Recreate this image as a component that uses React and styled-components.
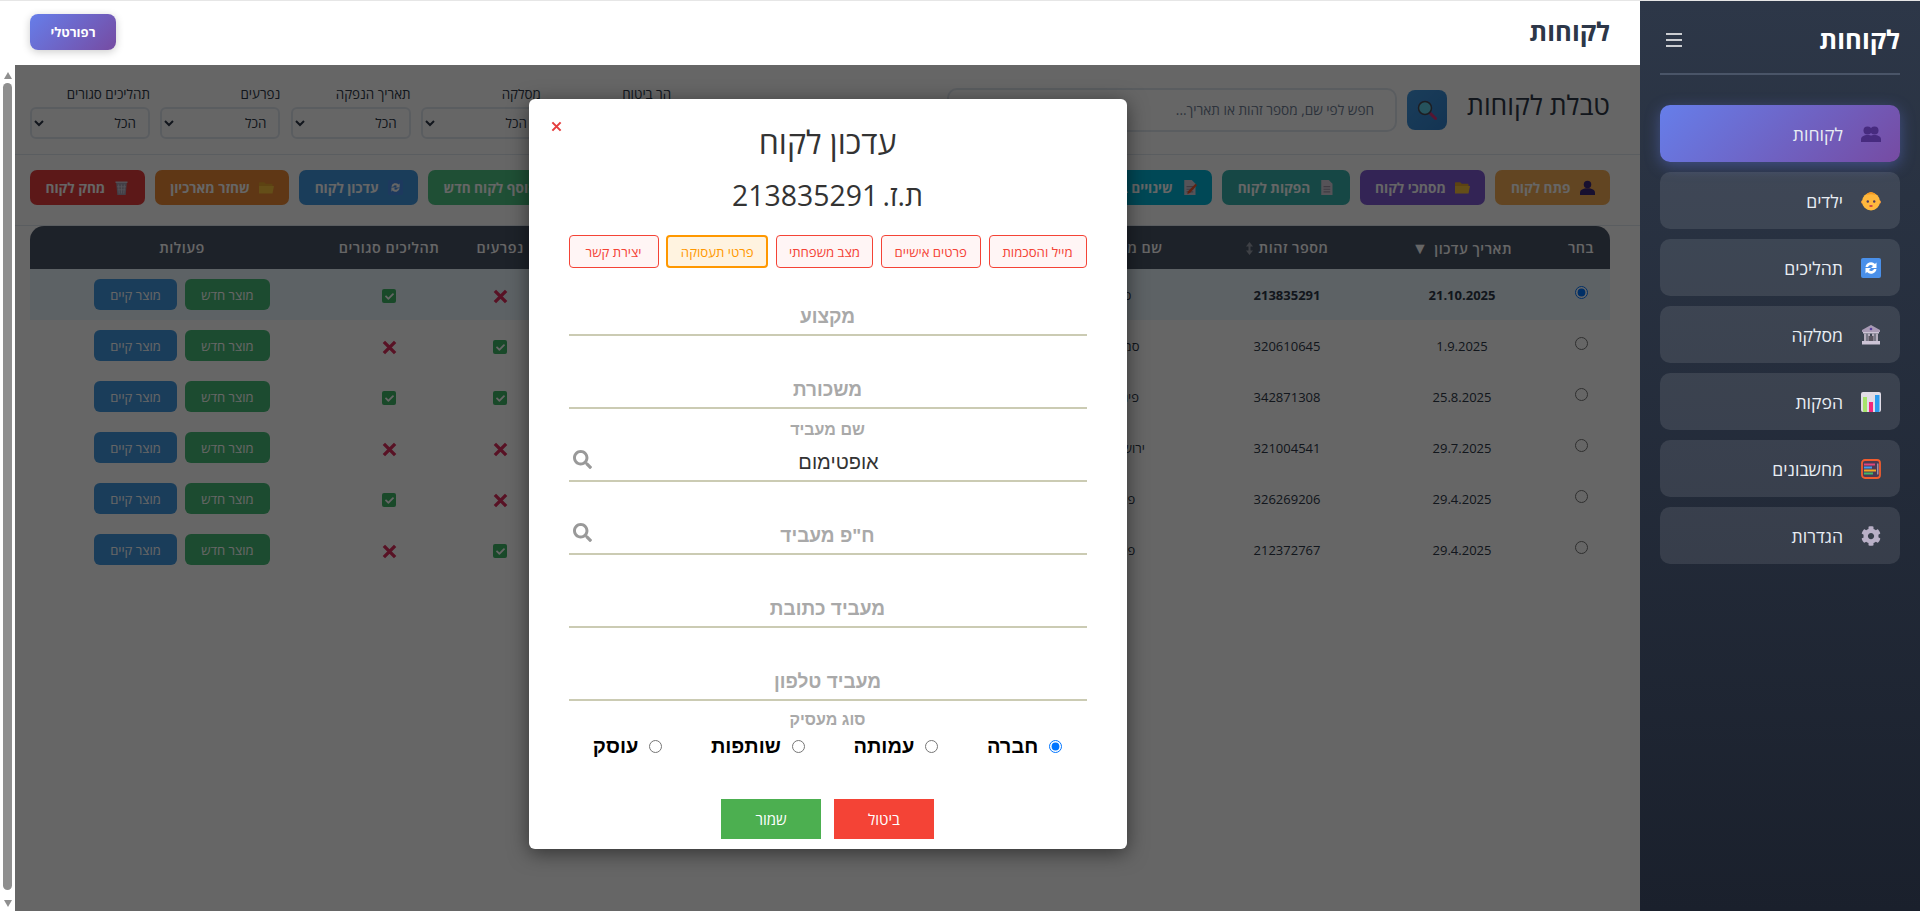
import React from "react";
import styled, { createGlobalStyle } from "styled-components";
import { FaSearch, FaCog, FaCheck } from "react-icons/fa";

const GlobalStyle = createGlobalStyle`
  * { box-sizing: border-box; }
  html, body { margin: 0; height: 100%; overflow: hidden; }
  body { font-family: "Open Sans", "Noto Sans", "Liberation Sans", sans-serif; color: #2d3748; background: #fff; }
`;

const Page = styled.div`
  display: flex;
  height: 911px;
  direction: rtl;
  border-top: 1px solid #e6e6e6;
`;

const Sidebar = styled.aside`
  width: 280px;
  flex: none;
  padding: 0 20px;
  background: linear-gradient(180deg, #2d3748 0%, #1a202c 100%);
`;

const SidebarHead = styled.div`
  height: 74px;
  padding-top: 5px;
  display: flex;
  align-items: center;
  justify-content: space-between;
  border-bottom: 2px solid #4a5568;
  color: #fff;
`;

const SidebarTitle = styled.h2`
  margin: 0;
  font-size: 25.6px;
  font-weight: 700;
`;

const Burger = styled.svg`
  width: 18px;
  height: 18px;
  margin-left: 5px;
`;

const Nav = styled.nav`
  display: flex;
  flex-direction: column;
  gap: 10px;
  margin-top: 30px;
`;

const NavItem = styled.div`
  height: 57px;
  display: flex;
  align-items: center;
  gap: 18px;
  padding: 0 19px;
  border-radius: 10px;
  color: #e8edf3;
  font-size: 17.6px;
  background: ${p => (p.$active ? "linear-gradient(135deg, #667eea 0%, #764ba2 100%)" : "rgba(255, 255, 255, 0.1)")};
  box-shadow: ${p => (p.$active ? "0 4px 15px rgba(102, 126, 234, 0.4)" : "none")};
`;

const Content = styled.div`
  flex: 1;
  min-width: 0;
  display: flex;
  flex-direction: column;
`;

const TopBar = styled.header`
  height: 64px;
  flex: none;
  display: flex;
  align-items: center;
  justify-content: space-between;
  padding: 0 30px 3px 30px;
  background: #fff;
`;

const TopTitle = styled.h1`
  margin: 0;
  font-size: 25.6px;
  font-weight: 700;
  color: #2d3748;
`;

const PortalButton = styled.button`
  width: 86px;
  height: 36px;
  border: 0;
  border-radius: 8px;
  background: linear-gradient(135deg, #667eea 0%, #764ba2 100%);
  box-shadow: 0 2px 8px rgba(0, 0, 0, 0.2);
  color: #fff;
  font: 700 13px "Open Sans", sans-serif;
`;

const Body = styled.div`
  flex: 1;
  min-height: 0;
  display: flex;
`;

const Main = styled.main`
  position: relative;
  flex: 1;
  min-width: 0;
  overflow: hidden;
  background: #fff;
`;

const Toolbar = styled.section`
  height: 90px;
  padding: 0 30px 0 15px;
  display: flex;
  align-items: center;
  justify-content: space-between;
  border-bottom: 1px solid #e2e8f0;
`;

const SearchGroup = styled.div`
  display: flex;
  align-items: center;
`;

const PageTitle = styled.h2`
  margin: 0 0 10px 20px;
  font-size: 26.6px;
  font-weight: 400;
  color: #2d3748;
`;

const SearchButton = styled.button`
  width: 40px;
  height: 40px;
  margin-left: 10px;
  padding: 0;
  display: flex;
  align-items: center;
  justify-content: center;
  border: 0;
  border-radius: 8px;
  background: linear-gradient(135deg, #4299e1, #3182ce);
`;

const SearchInput = styled.input`
  width: 450px;
  height: 44px;
  padding: 0 21px;
  border: 2px solid #e2e8f0;
  border-radius: 10px;
  background: #fff;
  font: 13.6px "Open Sans", sans-serif;
  direction: rtl;
  &::placeholder { color: #718096; opacity: 1; }
`;

const Filters = styled.div`
  display: flex;
  gap: 10.3px;
  padding-top: 4px;
`;

const FilterBox = styled.label`
  width: 120px;
  display: flex;
  flex-direction: column;
  gap: 4px;
  font-size: 13.4px;
  color: #2d3748;
  line-height: 18px;
  white-space: nowrap;
`;

const FilterSelect = styled.select`
  height: 32px;
  padding: 0 8px;
  border: 2px solid #e2e8f0;
  border-radius: 6px;
  background: #fff;
  color: #2d3748;
  font: 13.4px "Open Sans", sans-serif;
`;

const Actions = styled.section`
  height: 71px;
  padding: 15px 30px 0 15px;
  display: flex;
  justify-content: space-between;
  border-bottom: 1px solid #e2e8f0;
`;

const ActionGroup = styled.div`
  display: flex;
  gap: 10px;
`;

const ActionButton = styled.button`
  height: 35px;
  padding: 0 15.5px;
  display: flex;
  align-items: center;
  gap: 9px;
  border: 0;
  border-radius: 7px;
  background: ${p => p.$color};
  color: #fff;
  font: 700 13.6px "Open Sans", sans-serif;
  white-space: nowrap;
`;

const TableWrap = styled.div`
  padding: 0 30px 0 15px;
`;

const Table = styled.table`
  width: 100%;
  table-layout: fixed;
  border-collapse: collapse;
`;

const HeadCell = styled.th`
  height: 43px;
  padding: 0;
  background: #4a5568;
  color: #fff;
  font-size: 14.4px;
  font-weight: 600;
  letter-spacing: 0.5px;
  white-space: nowrap;
  &:first-child { border-top-right-radius: 14px; }
  &:last-child { border-top-left-radius: 14px; }
`;

const SortMark = styled.span`
  margin-right: 6px;
  font-size: 16px;
`;

const SortBoth = styled.svg`
  margin-right: 6px;
  vertical-align: -2px;
`;

const Row = styled.tr`
  height: 51px;
  background: ${p => (p.$selected ? "#e8f5fc" : "transparent")};
`;

const Cell = styled.td`
  padding: 0;
  text-align: center;
  font-size: 13px;
  font-weight: ${p => (p.$bold ? 700 : 400)};
  color: #2d3748;
`;

const RowRadio = styled.input`
  width: 13px;
  height: 13px;
  margin: 0;
  position: relative;
  top: -1px;
`;

const CrossSvg = styled.svg`
  display: ${p => (p.$inline ? "inline-block" : "block")};
  vertical-align: middle;
`;

const Ticked = styled.span`
  width: 14px;
  height: 14px;
  display: inline-flex;
  align-items: center;
  justify-content: center;
  vertical-align: middle;
  border-radius: 2px;
  background: #3fb668;
  color: #fff;
  font-size: 9px;
`;

const RowActions = styled.div`
  display: flex;
  justify-content: center;
  gap: 8px;
`;

const RowButton = styled.button`
  width: ${p => p.$width}px;
  height: 31px;
  padding: 0;
  border: 0;
  border-radius: 6px;
  background: ${p => p.$color};
  color: #fff;
  font: 13px "Open Sans", sans-serif;
`;

const ScrollTrack = styled.div`
  width: 15px;
  flex: none;
  display: flex;
  flex-direction: column;
  align-items: center;
  padding: 7px 0 4px;
  gap: 4px;
  background: #fff;
`;

const ScrollArrow = styled.span`
  width: 0;
  height: 0;
  border-left: 4.5px solid transparent;
  border-right: 4.5px solid transparent;
  border-${p => (p.$down ? "top" : "bottom")}: 7px solid #8f8f8f;
`;

const ScrollThumb = styled.div`
  flex: 1;
  width: 9px;
  margin: 0 0 6px;
  border-radius: 5px;
  background: #8f8f8f;
`;

const Overlay = styled.div`
  position: absolute;
  inset: 0;
  display: flex;
  justify-content: center;
  align-items: flex-start;
  padding-top: 34px;
  background: rgba(0, 0, 0, 0.6);
`;

const Modal = styled.div`
  position: relative;
  width: 598px;
  height: 750px;
  padding: 0 40px;
  border-radius: 6px;
  background: #fff;
  box-shadow: 0 4px 20px rgba(0, 0, 0, 0.5);
`;

const CloseButton = styled.span`
  position: absolute;
  top: 22px;
  left: 22px;
`;

const ModalTitle = styled.h2`
  margin: 0;
  padding-top: 20px;
  height: 67px;
  text-align: center;
  font-size: 32px;
  line-height: 46px;
  font-weight: 400;
  color: #333;
`;

const ModalId = styled.h3`
  margin: 0;
  height: 69px;
  padding-top: 7px;
  text-align: center;
  font-size: 28.4px;
  line-height: 44px;
  font-weight: 400;
  word-spacing: -3px;
  color: #333;
`;

const Tabs = styled.div`
  display: flex;
  justify-content: space-between;
`;

const Tab = styled.button`
  width: ${p => p.$width}px;
  height: 33px;
  padding: 0;
  border: ${p => (p.$active ? "2px solid #ff9800" : "1px solid #f44336")};
  border-radius: 4px;
  background: ${p => (p.$active ? "#fff3e0" : "#fff5f5")};
  color: ${p => (p.$active ? "#ff9800" : "#f44336")};
  font: 13.2px "Open Sans", sans-serif;
`;

const Fields = styled.div`
  margin-top: -5px;
`;

const Field = styled.div`
  position: relative;
  height: 73px;
  display: flex;
  flex-direction: column;
  justify-content: flex-end;
  align-items: center;
`;

const FieldLabel = styled.label`
  font: 700 16px/20px "Liberation Sans", sans-serif;
  color: #a9a9a9;
`;

const LiftedLabel = styled(FieldLabel)`
  margin-bottom: 4px;
`;

const FieldInput = styled.input`
  width: 100%;
  height: 38px;
  padding: ${p => (p.$filled ? "0 8px 0 30px" : "0 30px")};
  border: 0;
  border-bottom: 2px solid #cbcbb3;
  outline: 0;
  background: transparent;
  text-align: center;
  direction: rtl;
  font: 20px "Liberation Sans", sans-serif;
  color: #333;
  &::placeholder { color: #a9a9a9; font-size: 19px; font-weight: 700; opacity: 1; }
`;

const FieldIcon = styled(FaSearch)`
  position: absolute;
  left: 4px;
  bottom: 13px;
  width: 19px;
  height: 19px;
  color: #999;
`;

const TypeLabel = styled(FieldLabel)`
  display: block;
  margin-top: 9px;
  text-align: center;
`;

const RadioRow = styled.div`
  display: flex;
  justify-content: space-around;
  margin-top: 3px;
`;

const RadioItem = styled.label`
  display: flex;
  align-items: center;
  gap: 11px;
  font: 700 20px/26px "Liberation Sans", sans-serif;
  color: #000;
`;

const TypeRadio = styled.input`
  width: 13px;
  height: 13px;
  margin: 0;
`;

const ModalButtons = styled.div`
  display: flex;
  justify-content: center;
  gap: 13px;
  margin-top: 40px;
`;

const ModalButton = styled.button`
  width: 100px;
  height: 40px;
  border: 0;
  background: ${p => p.$color};
  color: #fff;
  font: 15px "Open Sans", sans-serif;
`;

/* small emoji style drawings */
const Cross = ({ size = 15, width = 3.6, color = "#dc2f5c", inline }) => (
  <CrossSvg $inline={inline} width={size} height={size} viewBox="0 0 16 16">
    <path d="M2 2l12 12M14 2L2 14" stroke={color} strokeWidth={width} fill="none" />
  </CrossSvg>
);

const UsersIcon = ({ size = 20, color = "#472b7f" }) => (
  <svg width={size} height={size} viewBox="0 0 20 20">
    <g fill={color}>
      <circle cx="6.500" cy="6.500" r="4" />
      <path d="M0 18v-2.500C0 12.500 3 11 6.500 11s6.500 1.500 6.500 4.500V18z" />
      <circle cx="13.500" cy="6.500" r="4" />
      <path d="M7 18v-2.500C7 12.500 10 11 13.500 11s6.500 1.500 6.500 4.500V18z" />
    </g>
  </svg>
);

const PersonIcon = () => (
  <svg width="15" height="15" viewBox="0 0 20 20">
    <g fill="#3d2a78">
      <circle cx="10" cy="6" r="5" />
      <path d="M0 20v-3c0-4 4-6 10-6s10 2 10 6v3z" />
    </g>
  </svg>
);

const BabyIcon = () => (
  <svg width="20" height="20" viewBox="0 0 20 20">
    <circle cx="1.800" cy="11" r="1.800" fill="#ff9d3c" />
    <circle cx="18.200" cy="11" r="1.800" fill="#ff9d3c" />
    <circle cx="10" cy="10.500" r="9" fill="#ffb83d" />
    <path d="M5 4c3-4 7-4 10 0-3-1-7-1-10 0z" fill="#f59a23" />
    <circle cx="6.800" cy="10.500" r="1.200" fill="#503a5c" />
    <circle cx="13.200" cy="10.500" r="1.200" fill="#503a5c" />
    <ellipse cx="10" cy="15" rx="1.800" ry="1" fill="#c9424a" />
  </svg>
);

const RefreshIcon = ({ size = 20 }) => (
  <svg width={size} height={size} viewBox="0 0 20 20">
    <rect width="20" height="20" rx="2" fill="#4a90ea" />
    <path d="M4.500 9a5.500 5.500 0 0 1 9.500-3l1.500-1.500V10h-5.500l2-2a3 3 0 0 0-5 1zM15.500 11a5.500 5.500 0 0 1-9.500 3l-1.500 1.500V10H10l-2 2a3 3 0 0 0 5-1z" fill="#fff" />
  </svg>
);

const BankIcon = () => (
  <svg width="20" height="20" viewBox="0 0 20 20">
    <path d="M10 0l9 5v2H1V5z" fill="#a99bb5" />
    <circle cx="10" cy="4" r="1.300" fill="#5b3f9c" />
    <path d="M2 7h16v1.500H2z" fill="#cdc4d6" />
    <path d="M3 8.500h2.500V16H3zM6.500 8.500H9V16H6.500zM11 8.500h2.500V16H11zM14.500 8.500H17V16h-2.500z" fill="#b4acbc" />
    <path d="M7.500 11h5v5h-5z" fill="#5a5560" />
    <path d="M1 16h18v3.500H1z" fill="#cdc4d6" />
  </svg>
);

const ChartIcon = () => (
  <svg width="20" height="20" viewBox="0 0 20 20">
    <rect width="20" height="20" rx="2" fill="#e1dce6" />
    <path d="M2 5h4v15H3a1 1 0 0 1-1-1z" fill="#a6e36b" />
    <path d="M8 10h4v10H8z" fill="#f3277b" />
    <path d="M14 3h4.500v16a1 1 0 0 1-1 1H14z" fill="#2b9bef" />
  </svg>
);

const AbacusIcon = () => (
  <svg width="20" height="20" viewBox="0 0 20 20">
    <rect x="1" y="1" width="18" height="18" rx="3" fill="#4a3a55" stroke="#f25c2e" strokeWidth="1.800" />
    <path d="M3 4.500h11v2H3z" fill="#e0457b" />
    <path d="M3 7.500h8v2H3z" fill="#3f9cf0" />
    <path d="M3 10.500h12v2H3z" fill="#f5a623" />
    <path d="M3 13.500h9v2H3z" fill="#43b86a" />
    <path d="M16 4.500h1.500v11H16z" fill="#9d8fa8" />
  </svg>
);

const MagnifierIcon = () => (
  <svg width="20" height="20" viewBox="0 0 20 20">
    <path d="M12.500 12.500l6 6" stroke="#d6367c" strokeWidth="3" strokeLinecap="round" />
    <circle cx="8" cy="8" r="6.500" fill="#5fd0e8" stroke="#4a4a55" strokeWidth="1.500" />
  </svg>
);

const FolderIcon = () => (
  <svg width="15" height="15" viewBox="0 0 20 20">
    <path d="M0 4a1 1 0 0 1 1-1h6l2 2h8a1 1 0 0 1 1 1v2H0z" fill="#e8a92e" />
    <path d="M0 18V8h20l-2 10z" fill="#f9c23c" />
  </svg>
);

const DocIcon = ({ edit }) => (
  <svg width="15" height="15" viewBox="0 0 20 20">
    <path d="M3 0h10l5 5v15H3z" fill="#d6d0dc" />
    <path d="M6 8h9v1.500H6zM6 11.500h9V13H6zM6 15h9v1.500H6z" fill="#9d95a6" />
    {edit && <path d="M20 7l-9 10-4 2 1-4 10-10z" fill="#f0562d" />}
  </svg>
);

const TrashIcon = () => (
  <svg width="15" height="15" viewBox="0 0 20 20">
    <path d="M2 2h16v2H2z" fill="#cfc8d6" />
    <path d="M3 4h14l-1.500 16h-11z" fill="#a89fb2" />
    <path d="M6 6l1 12M10 6v12M14 6l-1 12M4 9h12M5 13h10" stroke="#d8d2de" strokeWidth="1" />
  </svg>
);

const CheckBox = () => (
  <Ticked>
    <FaCheck />
  </Ticked>
);

const navItems = [
  { label: "לקוחות", icon: <UsersIcon />, active: true },
  { label: "ילדים", icon: <BabyIcon /> },
  { label: "תהליכים", icon: <RefreshIcon /> },
  { label: "מסלקה", icon: <BankIcon /> },
  { label: "הפקות", icon: <ChartIcon /> },
  { label: "מחשבונים", icon: <AbacusIcon /> },
  { label: "הגדרות", icon: <FaCog size={20} color="#b9b0c7" /> },
];

const filters = ["הר ביטוח", "מסלקה", "תאריך הנפקה", "נפרעים", "תהליכים סגורים"];

const rows = [
  { date: "21.10.2025", id: "213835291", name: "כץ", paid: false, closed: true, selected: true },
  { date: "1.9.2025", id: "320610645", name: "סמדר", paid: true, closed: false },
  { date: "25.8.2025", id: "342871308", name: "פינטו", paid: true, closed: true },
  { date: "29.7.2025", id: "321004541", name: "ירושלמי", paid: false, closed: false },
  { date: "29.4.2025", id: "326269206", name: "פרץ", paid: false, closed: true },
  { date: "29.4.2025", id: "212372767", name: "פרץ", paid: true, closed: false },
];

const tabs = [
  { label: "מייל והסכמות", width: 98 },
  { label: "פרטים אישיים", width: 100 },
  { label: "מצב משפחתי", width: 97 },
  { label: "פרטי תעסוקה", width: 102, active: true },
  { label: "יצירת קשר", width: 90 },
];

export default function App() {
  return (
    <>
      <GlobalStyle />
      <Page>
        <Sidebar>
          <SidebarHead>
            <SidebarTitle>לקוחות</SidebarTitle>
            <Burger viewBox="0 0 18 18" stroke="#fff" strokeWidth="1.500">
              <path d="M1 3h16M1 9h16M1 15h16" />
            </Burger>
          </SidebarHead>
          <Nav>
            {navItems.map(item => (
              <NavItem key={item.label} $active={item.active}>
                {item.icon}
                {item.label}
              </NavItem>
            ))}
          </Nav>
        </Sidebar>

        <Content>
          <TopBar>
            <TopTitle>לקוחות</TopTitle>
            <PortalButton>רפורטלי</PortalButton>
          </TopBar>
          <Body>
            <Main>
              <Toolbar>
                <SearchGroup>
                  <PageTitle>טבלת לקוחות</PageTitle>
                  <SearchButton>
                    <MagnifierIcon />
                  </SearchButton>
                  <SearchInput placeholder="חפש לפי שם, מספר זהות או תאריך..." />
                </SearchGroup>
                <Filters>
                  {filters.map(name => (
                    <FilterBox key={name}>
                      {name}
                      <FilterSelect>
                        <option>הכל</option>
                      </FilterSelect>
                    </FilterBox>
                  ))}
                </Filters>
              </Toolbar>

              <Actions>
                <ActionGroup>
                  <ActionButton $color="#f6ad55"><PersonIcon />פתח לקוח</ActionButton>
                  <ActionButton $color="#805ad5"><FolderIcon />מסמכי לקוח</ActionButton>
                  <ActionButton $color="#38b2ac"><DocIcon />הפקות לקוח</ActionButton>
                  <ActionButton $color="#00b5d8"><DocIcon edit />שינויים בלקוח</ActionButton>
                </ActionGroup>
                <ActionGroup>
                  <ActionButton $color="#4fc585">הוסף לקוח חדש</ActionButton>
                  <ActionButton $color="#4299e1"><RefreshIcon size={15} />עדכון לקוח</ActionButton>
                  <ActionButton $color="#ed8936"><FolderIcon />שחזר מארכיון</ActionButton>
                  <ActionButton $color="#e53e3e"><TrashIcon />מחק לקוח</ActionButton>
                </ActionGroup>
              </Actions>

              <TableWrap>
                <Table>
                  <colgroup>
                    <col width="58" />
                    <col width="180" />
                    <col width="170" />
                    <col width="154" />
                    <col width="492" />
                    <col width="112" />
                    <col width="110" />
                    <col width="304" />
                  </colgroup>
                  <thead>
                    <tr>
                      <HeadCell>בחר</HeadCell>
                      <HeadCell>תאריך עדכון<SortMark>▼</SortMark></HeadCell>
                      <HeadCell>
                        מספר זהות
                        <SortBoth width="7" height="13" viewBox="0 0 7 13">
                          <path d="M3.500 0L7 4.500H4.500v4H7L3.500 13 0 8.500h2.500v-4H0z" fill="#fff" opacity="0.45" />
                        </SortBoth>
                      </HeadCell>
                      <HeadCell>שם משפחה</HeadCell>
                      <HeadCell />
                      <HeadCell>נפרעים</HeadCell>
                      <HeadCell>תהליכים סגורים</HeadCell>
                      <HeadCell>פעולות</HeadCell>
                    </tr>
                  </thead>
                  <tbody>
                    {rows.map(row => (
                      <Row key={row.id} $selected={row.selected}>
                        <Cell><RowRadio type="radio" name="client" defaultChecked={row.selected} /></Cell>
                        <Cell $bold={row.selected}>{row.date}</Cell>
                        <Cell $bold={row.selected}>{row.id}</Cell>
                        <Cell>{row.name}</Cell>
                        <Cell />
                        <Cell>{row.paid ? <CheckBox /> : <Cross inline />}</Cell>
                        <Cell>{row.closed ? <CheckBox /> : <Cross inline />}</Cell>
                        <Cell>
                          <RowActions>
                            <RowButton $width={85} $color="#48bb78">מוצר חדש</RowButton>
                            <RowButton $width={83} $color="#4299e1">מוצר קיים</RowButton>
                          </RowActions>
                        </Cell>
                      </Row>
                    ))}
                  </tbody>
                </Table>
              </TableWrap>

              <Overlay>
                <Modal>
                  <CloseButton>
                    <Cross size={11} width={3} color="#e53e3e" />
                  </CloseButton>
                  <ModalTitle>עדכון לקוח</ModalTitle>
                  <ModalId>ת.ז. 213835291</ModalId>
                  <Tabs>
                    {tabs.map(tab => (
                      <Tab key={tab.label} $width={tab.width} $active={tab.active}>{tab.label}</Tab>
                    ))}
                  </Tabs>
                  <Fields>
                    <Field><FieldInput placeholder="מקצוע" /></Field>
                    <Field><FieldInput placeholder="משכורת" /></Field>
                    <Field>
                      <LiftedLabel>שם מעביד</LiftedLabel>
                      <FieldInput $filled defaultValue="אופטימום" />
                      <FieldIcon />
                    </Field>
                    <Field>
                      <FieldInput placeholder='ח"פ מעביד' />
                      <FieldIcon />
                    </Field>
                    <Field><FieldInput placeholder="מעביד כתובת" /></Field>
                    <Field><FieldInput placeholder="מעביד טלפון" /></Field>
                  </Fields>
                  <TypeLabel>סוג מעסיק</TypeLabel>
                  <RadioRow>
                    <RadioItem><TypeRadio type="radio" name="employer" defaultChecked />חברה</RadioItem>
                    <RadioItem><TypeRadio type="radio" name="employer" />עמותה</RadioItem>
                    <RadioItem><TypeRadio type="radio" name="employer" />שותפות</RadioItem>
                    <RadioItem><TypeRadio type="radio" name="employer" />עוסק</RadioItem>
                  </RadioRow>
                  <ModalButtons>
                    <ModalButton $color="#f44336">ביטול</ModalButton>
                    <ModalButton $color="#4caf50">שמור</ModalButton>
                  </ModalButtons>
                </Modal>
              </Overlay>
            </Main>
            <ScrollTrack>
              <ScrollArrow />
              <ScrollThumb />
              <ScrollArrow $down />
            </ScrollTrack>
          </Body>
        </Content>
      </Page>
    </>
  );
}
